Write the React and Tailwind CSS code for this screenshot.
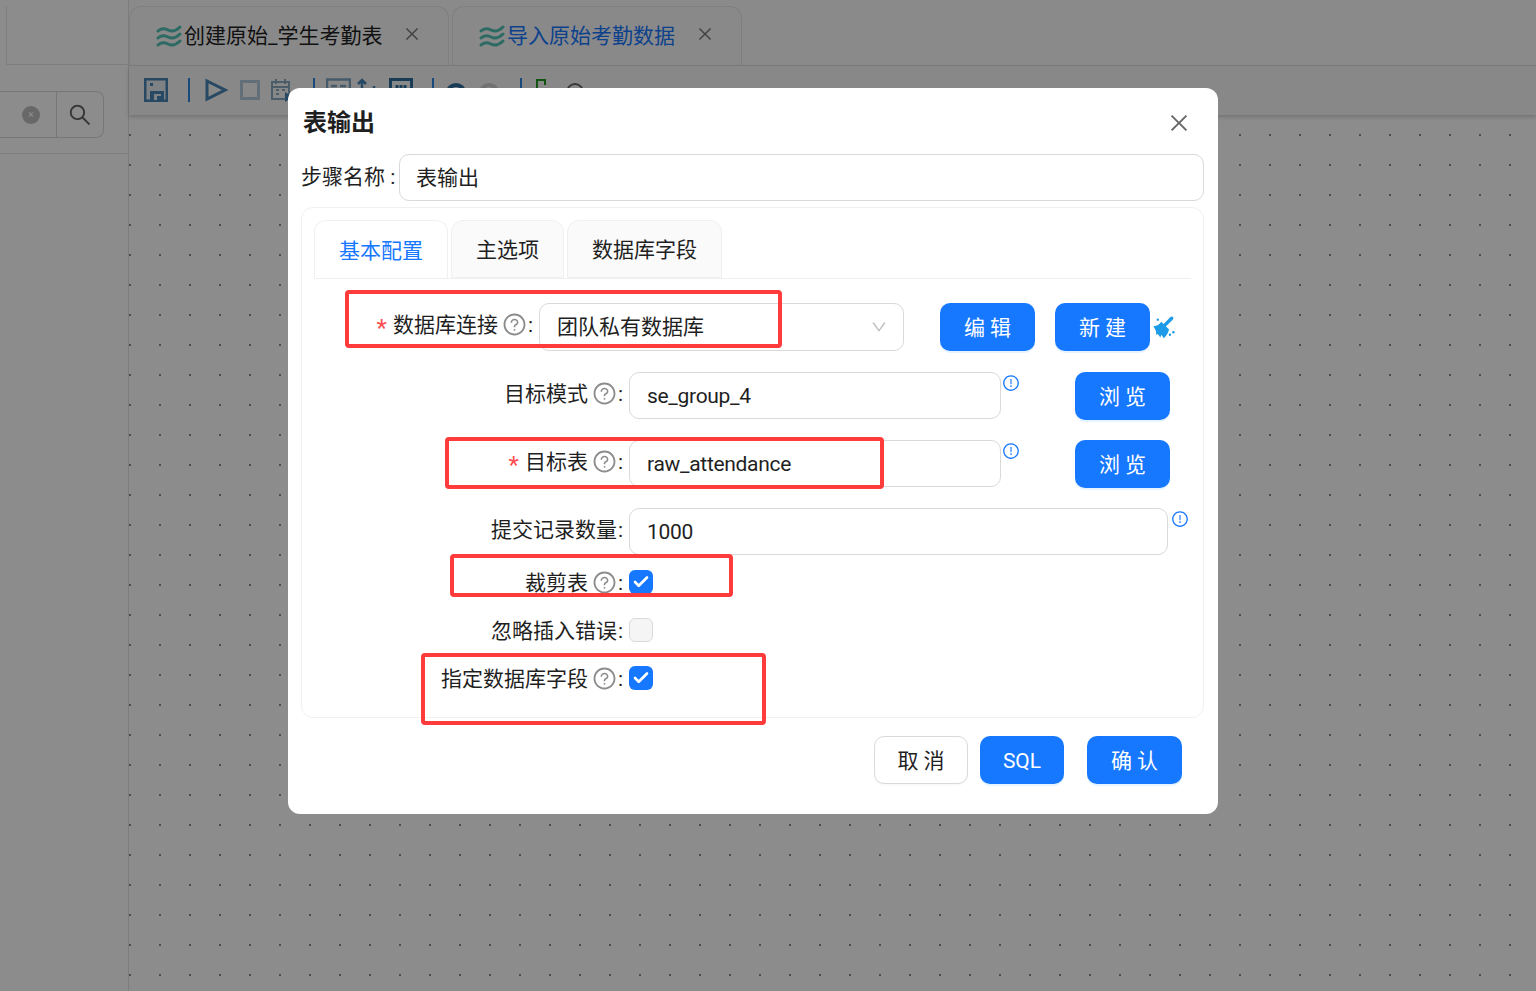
import { AiOutlineClose, AiOutlineDown, AiOutlineExclamationCircle, AiOutlineQuestionCircle, AiOutlineSearch } from 'react-icons/ai';
import { Check } from 'lucide-react';

const font = { fontFamily: 'Roboto, "Noto Sans CJK SC", sans-serif' };

function Waves() {
  return (
    <svg width="26" height="22" viewBox="0 0 26 22" fill="none" stroke="#52c2b6" strokeWidth="3" strokeLinecap="round">
      <path d="M2 6c3-3 6-3 10-1s8 1 12-3" />
      <path d="M2 13c3-3 6-3 10-1s8 1 12-3" />
      <path d="M2 20c3-3 6-3 10-1s8 1 12-3" />
    </svg>
  );
}

function Broom() {
  return (
    <svg width="26" height="26" viewBox="0 0 30 30" fill="#1e9be8" className="shrink-0">
      <path d="M25 5L16 14" stroke="#1e9be8" strokeWidth="4" strokeLinecap="round" />
      <path d="M4 14c4 0 7-2 9-5l9 9c-1 4-3 7-6 10l-3-4-1 3-3-4-2 1v-4z" />
      <circle cx="9" cy="6.500" r="1.400" />
      <circle cx="27" cy="21" r="1.400" />
      <circle cx="23" cy="24" r="1.400" />
    </svg>
  );
}

function TopTab({ label, active, width }) {
  return (
    <div className={`flex h-[59px] items-center rounded-t-xl border border-b-0 border-[#e5e5e5] bg-[#fafafa] pl-[26px] ${width}`}>
      <Waves />
      <span className={`ml-0.5 pt-[2px] text-[21px] ${active ? 'text-[#1677ff]' : 'text-[#1f1f1f]'}`}>{label}</span>
      <AiOutlineClose size={18} className="ml-[21px] mb-1 text-[#777]" />
    </div>
  );
}

function Divider({ className }) {
  return <div className={`h-6 w-0.5 shrink-0 bg-[#2a86e0] ${className}`} />;
}

function Toolbar() {
  return (
    <div className="flex h-[49px] shrink-0 items-center bg-[#f8f8f8] pb-[1px] pl-[15px] shadow-[0_2px_4px_rgba(0,0,0,0.18)]">
      <svg width="24" height="24" viewBox="0 0 24 24" className="shrink-0">
        <path fill="#4a86b5" d="M0 0h24v24H0z" />
        <path fill="#e6edf3" d="M2.500 2.500h19v19h-19z" />
        <path fill="#4a86b5" d="M6 5h3v3H6zM6 13h14v9H6z" />
        <path fill="#e6edf3" d="M10 16h7v6h-7z" />
        <path fill="#4a86b5" d="M13 18h4v4h-4z" />
      </svg>
      <Divider className="ml-5" />
      <svg width="23" height="24" viewBox="0 0 23 24" fill="none" stroke="#4a86b5" strokeWidth="3" className="ml-[15px] shrink-0"><path d="M2 3l18 9L2 21z" /></svg>
      <svg width="20" height="20" viewBox="0 0 20 20" fill="none" stroke="#b4cadb" strokeWidth="3" className="ml-3 shrink-0"><path d="M1.500 1.500h17v17h-17z" /></svg>
      <svg width="22" height="24" viewBox="0 0 22 24" fill="none" stroke="#8aa9c2" strokeWidth="2" className="ml-[11px] shrink-0"><path d="M1 4h17v17H1zM5 1v5M14 1v5M1 9h17M5 12h3M11 12h3M5 16h3" /><path fill="#4a86b5" stroke="none" d="M14 14l8 5-8 5z" /></svg>
      <Divider className="ml-5" />
      <svg width="25" height="24" viewBox="0 0 25 24" fill="none" stroke="#7ea4c2" strokeWidth="2.500" className="ml-[11px] shrink-0"><path d="M1 1.500h23v13H1zM5 8h6M14 8h6" /></svg>
      <svg width="20" height="24" viewBox="0 0 20 24" fill="none" stroke="#4a86b5" strokeWidth="2.500" className="ml-[5px] shrink-0"><path d="M6 2v18M2 6l4-4 4 4M18 8v10" /></svg>
      <svg width="24" height="24" viewBox="0 0 24 24" fill="none" stroke="#2f6f9f" strokeWidth="3" className="ml-[13px] shrink-0"><path d="M1.500 1.500h21v21h-21zM8 7v7M12 7v5M16 7v7" /></svg>
      <Divider className="ml-[19px]" />
      <svg width="20" height="24" viewBox="0 0 20 24" fill="none" stroke="#2f6f9f" strokeWidth="4" className="ml-[12px] shrink-0"><path d="M2 14a8 7 0 0 1 16 0" /></svg>
      <svg width="20" height="24" viewBox="0 0 20 24" fill="none" stroke="#cfcfcf" strokeWidth="4" className="ml-[13px] shrink-0"><path d="M2 14a8 7 0 0 1 16 0" /></svg>
      <Divider className="ml-[21px]" />
      <svg width="12" height="24" viewBox="0 0 12 24" fill="none" stroke="#1c9c1c" strokeWidth="2" className="ml-[13px] shrink-0"><path d="M2 22V2h8v5" /></svg>
      <svg width="20" height="24" viewBox="0 0 20 24" fill="none" stroke="#666" strokeWidth="2" className="ml-[18px] shrink-0"><path d="M2 22V14a8 8 0 0 1 16 0v8" /></svg>
    </div>
  );
}

function Help() {
  return <AiOutlineQuestionCircle size={25} className="ml-1 shrink-0 text-[#8c8c8c]" />;
}

function FormRow({ label, required, help, labelWidth, lift, className, children }) {
  return (
    <div className={`flex ${className}`}>
      <div className={`flex shrink-0 items-center justify-end self-stretch ${lift ? 'pb-[6px]' : ''} ${labelWidth}`}>
        {required && <span className="mr-[6px] mt-2 text-[24px] leading-none text-[#ff4d4f]">*</span>}
        <span className="whitespace-nowrap pt-1">{label}</span>
        {help && <Help />}
        <span className="ml-[1px] mr-[6px] pt-1">:</span>
      </div>
      {children}
    </div>
  );
}

function TextInput({ value, width }) {
  return (
    <div className={`flex h-[47px] items-center rounded-[10px] border border-[#d9d9d9] bg-white px-[17px] pt-[3px] tracking-[-0.3px] ${width}`}>{value}</div>
  );
}

function Btn({ children, width, primary = true }) {
  return (
    <button
      className={`h-[48px] shrink-0 rounded-[10px] pt-1 text-[21px] ${width} ${
        primary
          ? 'bg-[#1677ff] text-white shadow-[0_2px_0_rgba(5,145,255,0.1)]'
          : 'border border-[#d9d9d9] bg-white text-[#1f1f1f] shadow-[0_2px_0_rgba(0,0,0,0.02)]'
      }`}
    >
      {children}
    </button>
  );
}

function Info({ className = 'ml-[1px]' }) {
  return <AiOutlineExclamationCircle size={18} className={`mt-[2px] shrink-0 text-[#1677ff] ${className}`} />;
}

function Box({ checked }) {
  if (checked) {
    return (
      <div className="flex h-6 w-6 items-center justify-center rounded-md bg-[#1677ff]">
        <Check size={18} strokeWidth={3.5} className="text-white" />
      </div>
    );
  }
  return <div className="h-6 w-6 rounded-md border border-[#d9d9d9] bg-[#f5f5f5]" />;
}

function Mark({ className }) {
  return <div className={`absolute rounded-[4px] border-4 border-[#ff3b3b] ${className}`} />;
}

export default function App() {
  return (
    <div className="relative flex h-[991px] w-[1536px] overflow-hidden bg-white text-[21px] text-[#1f1f1f]" style={font}>
      <aside className="w-[129px] shrink-0 border-r border-[#e3e3e3] pt-[6px]">
        <div className="ml-[6px] h-[59px] border-b border-l border-[#e5e5e5]" />
        <div className="mt-[26px] flex h-[47px] w-[104px] rounded-r-lg border border-l-0 border-[#d9d9d9]">
          <div className="flex flex-1 items-center justify-end pr-4">
            <div className="flex h-[18px] w-[18px] items-center justify-center rounded-full bg-[#bdbdbd] text-[11px] leading-none text-white">×</div>
          </div>
          <div className="flex w-[47px] items-center justify-center border-l border-[#d9d9d9]">
            <AiOutlineSearch size={26} className="text-[#666]" />
          </div>
        </div>
        <div className="mt-[15px] border-t border-[#e5e5e5]" />
      </aside>

      <main className="flex flex-1 flex-col">
        <div className="flex h-[66px] shrink-0 items-end gap-[3px] border-b border-[#e3e3e3] bg-[#fbfbfb]">
          <TopTab label="创建原始_学生考勤表" width="w-[320px]" />
          <TopTab label="导入原始考勤数据" active width="w-[290px]" />
        </div>
        <Toolbar />
        <div className="flex-1 bg-[radial-gradient(circle_at_1px_1px,#8f8f8f_1px,transparent_1px)] bg-[length:30px_30px] bg-[position:0_19px]" />
      </main>

      <div className="absolute inset-0 bg-black/45" />

      <div className="absolute left-[288px] top-[88px] flex h-[726px] w-[930px] flex-col rounded-xl bg-white pl-[13px] pr-[14px]">
        <div className="flex h-[66px] shrink-0 items-start justify-between pt-[18px]">
          <h2 className="pl-[2px] text-[24px] font-bold leading-[34px]">表输出</h2>
          <AiOutlineClose size={24} className="mr-[13px] mt-[5px] text-[#666]" />
        </div>

        <div className="flex items-center">
          <span className="w-[98px] shrink-0 whitespace-nowrap">步骤名称 :</span>
          <div className="flex h-[47px] flex-1 items-center rounded-[10px] border border-[#d9d9d9] bg-white px-4 pt-[2px]">表输出</div>
        </div>

        <section className="mt-[6px] h-[511px] rounded-xl border border-[#f0f0f0] px-3 pt-3">
          <div className="flex gap-[3px] border-b border-[#f0f0f0]">
            <div className="flex h-[58px] w-[134px] items-center justify-center rounded-t-xl border border-b-0 border-[#f0f0f0] bg-white pt-1 text-[#1677ff]">基本配置</div>
            <div className="flex h-[58px] w-[113px] items-center justify-center rounded-t-xl border border-[#f0f0f0] bg-[#fafafa] pt-1">主选项</div>
            <div className="flex h-[58px] w-[155px] items-center justify-center rounded-t-xl border border-[#f0f0f0] bg-[#fafafa] pt-1">数据库字段</div>
          </div>

          <div className="-ml-3 mt-6 flex flex-col">
            <FormRow label="数据库连接" required help lift labelWidth="w-[237px]" className="h-[48px] items-center">
              <div className="flex h-[48px] w-[365px] items-center justify-between rounded-[10px] border border-[#d9d9d9] pl-[17px] pr-[15px]">
                <span className="pt-[2px]">团队私有数据库</span>
                <AiOutlineDown size={18} className="text-[#bfbfbf]" />
              </div>
              <Btn width="ml-[36px] w-[95px]">编 辑</Btn>
              <Btn width="ml-[20px] w-[95px]">新 建</Btn>
              <Broom />
            </FormRow>

            <FormRow label="目标模式" help lift labelWidth="w-[327px]" className="mt-[21px] items-start">
              <TextInput value="se_group_4" width="w-[372px]" />
              <div className="w-[74px]"><Info /></div>
              <Btn width="w-[95px]">浏 览</Btn>
            </FormRow>

            <FormRow label="目标表" required help lift labelWidth="w-[327px]" className="mt-[20px] items-start">
              <TextInput value="raw_attendance" width="w-[372px]" />
              <div className="w-[74px]"><Info /></div>
              <Btn width="w-[95px]">浏 览</Btn>
            </FormRow>

            <FormRow label="提交记录数量" lift labelWidth="w-[327px]" className="mt-[20px] items-start">
              <TextInput value="1000" width="w-[539px]" />
              <Info className="ml-[3px]" />
            </FormRow>

            <FormRow label="裁剪表" help labelWidth="w-[327px]" className="mt-[15px] h-6 items-center">
              <Box checked />
            </FormRow>

            <FormRow label="忽略插入错误" labelWidth="w-[327px]" className="mt-6 h-6 items-center">
              <Box />
            </FormRow>

            <FormRow label="指定数据库字段" help labelWidth="w-[327px]" className="mt-6 h-6 items-center">
              <Box checked />
            </FormRow>
          </div>
        </section>

        <div className="mt-[18px] flex justify-end pr-[22px]">
          <Btn primary={false} width="w-[94px]">取 消</Btn>
          <Btn width="ml-3 w-[84px]">SQL</Btn>
          <Btn width="ml-[23px] w-[95px]">确 认</Btn>
        </div>
      </div>

      <Mark className="left-[345px] top-[290px] h-[58px] w-[437px]" />
      <Mark className="left-[445px] top-[437px] h-[52px] w-[439px]" />
      <Mark className="left-[450px] top-[554px] h-[43px] w-[283px]" />
      <Mark className="left-[421px] top-[653px] h-[72px] w-[345px]" />
    </div>
  );
}
